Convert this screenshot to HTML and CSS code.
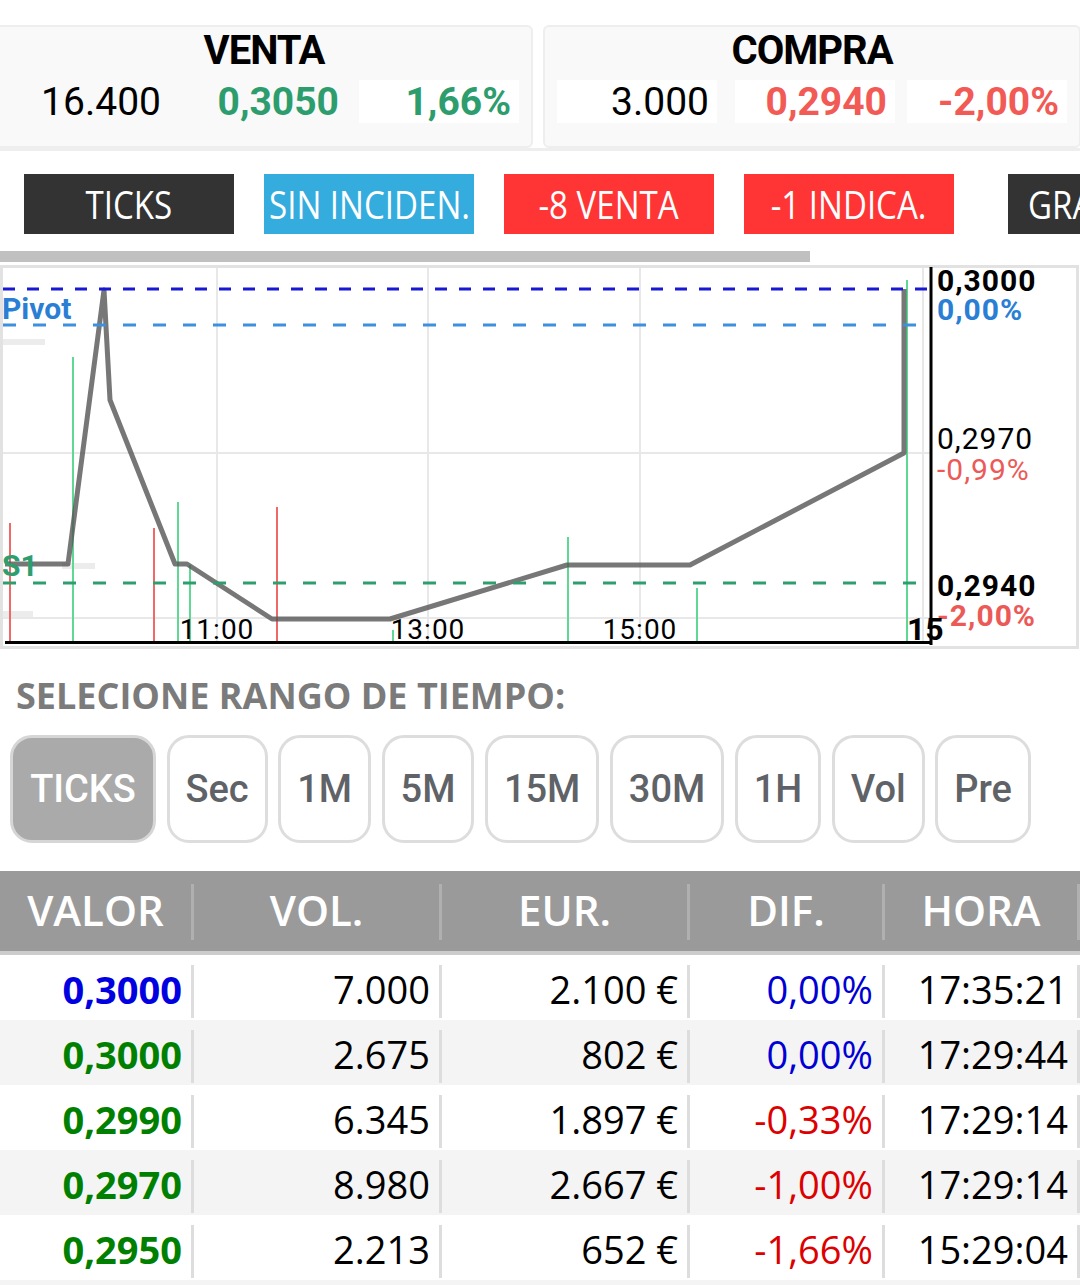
FILE: index.html
```html
<!DOCTYPE html>
<html lang="es">
<head>
  <meta charset="UTF-8" />
  <title>Cotización</title>
  <meta name="viewport" content="width=device-width, initial-scale=1.0" />
  <link rel="stylesheet" href="styles.css">
</head>
<body>

  <div class="cotizacion">
    <div class="panel">
      <h2>VENTA</h2>
      <div class="valores">
        <span class="valor">16.400</span>
        <span class="valor sube">0,3050</span>
        <span class="valor pct sube blanco">1,66%</span>
      </div>
    </div>
    <div class="panel">
      <h2>COMPRA</h2>
      <div class="valores">
        <span class="valor blanco">3.000</span>
        <span class="valor baja blanco">0,2940</span>
        <span class="valor pct baja blanco">-2,00%</span>
      </div>
    </div>
  </div>

  <div class="pestanas">
    <div class="pestana oscura"><span>TICKS</span></div>
    <div class="pestana azul"><span>SIN INCIDEN.</span></div>
    <div class="pestana roja"><span>-8 VENTA</span></div>
    <div class="pestana roja"><span>-1 INDICA.</span></div>
    <div class="pestana oscura ultima"><span>GRAFICOS</span></div>
  </div>

  <div class="barra"></div>

  <svg class="grafico" width="1080" height="385" viewBox="0 0 1080 385">
    <rect x="1.5" y="1.5" width="1076" height="381" fill="#fff" stroke="#e2e2e2" stroke-width="3"/>
    <g stroke="#e8e8e8" stroke-width="2">
      <line x1="3" y1="188" x2="930" y2="188"/>
      <line x1="3" y1="353" x2="930" y2="353"/>
      <line x1="217" y1="3" x2="217" y2="377"/>
      <line x1="428" y1="3" x2="428" y2="377"/>
      <line x1="640" y1="3" x2="640" y2="377"/>
      <line x1="923" y1="3" x2="923" y2="377"/>
    </g>
    <g fill="#ececec">
      <rect x="3" y="74" width="42" height="6"/>
      <rect x="62" y="298" width="33" height="6"/>
      <rect x="3" y="346" width="30" height="6"/>
    </g>
    <g stroke="#f06868" stroke-width="2">
      <line x1="10" y1="258" x2="10" y2="376"/>
      <line x1="154" y1="263" x2="154" y2="376"/>
      <line x1="277" y1="242" x2="277" y2="376"/>
    </g>
    <g stroke="#5fd894" stroke-width="2">
      <line x1="73" y1="92" x2="73" y2="376"/>
      <line x1="178" y1="237" x2="178" y2="376"/>
      <line x1="190" y1="300" x2="190" y2="376"/>
      <line x1="393" y1="365" x2="393" y2="376"/>
      <line x1="568" y1="272" x2="568" y2="376"/>
      <line x1="697" y1="323" x2="697" y2="376"/>
      <line x1="907" y1="15" x2="907" y2="376"/>
    </g>
    <polyline points="5,299 68,299 104,25 110,135 175,299 187,299 272,354 390,354 567,300 690,300 904,188 904,24"
      fill="none" stroke="#555" stroke-opacity="0.8" stroke-width="5" stroke-linejoin="round"/>
    <line x1="3" y1="24" x2="930" y2="24" stroke="#1717d4" stroke-width="3" stroke-dasharray="12 12"/>
    <line x1="3" y1="60" x2="930" y2="60" stroke="#3d8fe0" stroke-width="3" stroke-dasharray="13 17"/>
    <line x1="3" y1="318" x2="930" y2="318" stroke="#2e9e6f" stroke-width="3" stroke-dasharray="13 17"/>
    <line x1="931" y1="2" x2="931" y2="380" stroke="#000" stroke-width="3"/>
    <line x1="5" y1="377.5" x2="932" y2="377.5" stroke="#000" stroke-width="3"/>

    <text class="et-pivot" x="2" y="54">Pivot</text>
    <text class="et-s1" x="2" y="311">S1</text>

    <text class="et-hora" x="217" y="374">11:00</text>
    <text class="et-hora" x="428" y="374">13:00</text>
    <text class="et-hora" x="640" y="374">15:00</text>

    <text class="et-precio fuerte" x="937" y="26">0,3000</text>
    <text class="et-precio fuerte azul-txt" x="937" y="55">0,00%</text>
    <text class="et-precio" x="937" y="184">0,2970</text>
    <text class="et-precio rojo-txt" x="937" y="215">-0,99%</text>
    <text class="et-precio fuerte" x="937" y="331">0,2940</text>
    <text class="et-precio fuerte rojo-txt" x="937" y="361">-2,00%</text>
    <text class="et-quince" x="907" y="375">15</text>
  </svg>

  <div class="rango-titulo">SELECIONE RANGO DE TIEMPO:</div>

  <div class="rangos">
    <button class="rango activo">TICKS</button>
    <button class="rango">Sec</button>
    <button class="rango">1M</button>
    <button class="rango">5M</button>
    <button class="rango">15M</button>
    <button class="rango">30M</button>
    <button class="rango">1H</button>
    <button class="rango">Vol</button>
    <button class="rango">Pre</button>
  </div>

  <div class="tabla">
    <div class="fila cabecera">
      <div class="celda">VALOR</div>
      <div class="celda">VOL.</div>
      <div class="celda">EUR.</div>
      <div class="celda">DIF.</div>
      <div class="celda">HORA</div>
    </div>
    <div class="fila">
      <div class="celda precio azul-fuerte">0,3000</div>
      <div class="celda">7.000</div>
      <div class="celda">2.100 €</div>
      <div class="celda dif-azul">0,00%</div>
      <div class="celda hora">17:35:21</div>
    </div>
    <div class="fila par">
      <div class="celda precio verde">0,3000</div>
      <div class="celda">2.675</div>
      <div class="celda">802 €</div>
      <div class="celda dif-azul">0,00%</div>
      <div class="celda hora">17:29:44</div>
    </div>
    <div class="fila">
      <div class="celda precio verde">0,2990</div>
      <div class="celda">6.345</div>
      <div class="celda">1.897 €</div>
      <div class="celda dif-rojo">-0,33%</div>
      <div class="celda hora">17:29:14</div>
    </div>
    <div class="fila par">
      <div class="celda precio verde">0,2970</div>
      <div class="celda">8.980</div>
      <div class="celda">2.667 €</div>
      <div class="celda dif-rojo">-1,00%</div>
      <div class="celda hora">17:29:14</div>
    </div>
    <div class="fila">
      <div class="celda precio verde">0,2950</div>
      <div class="celda">2.213</div>
      <div class="celda">652 €</div>
      <div class="celda dif-rojo">-1,66%</div>
      <div class="celda hora">15:29:04</div>
    </div>
    <div class="fila par"></div>
  </div>

</body>
</html>
```

FILE: styles.css
```css
* {
  box-sizing: border-box;
}

body {
  margin: 0;
  width: 1080px;
  overflow: hidden;
  background: #fff;
  font-family: Roboto, sans-serif;
  color: #000;
}

/* cabecera venta / compra */
.cotizacion {
  display: flex;
  gap: 10px;
  margin-left: -5px;
  padding-top: 25px;
  border-bottom: 3px solid #eeeeee;
}

.panel {
  flex: 0 0 536px;
  height: 123px;
  background: #f9f9f9;
  border: 2px solid #eeeeee;
  border-radius: 6px;
  padding: 2px 12px 0;
}

.panel h2 {
  margin: 0;
  font-size: 40px;
  line-height: 44px;
  font-weight: 700;
  text-align: center;
  letter-spacing: -1px;
}

.valores {
  display: flex;
  margin-top: 7px;
}

.valor {
  width: 160px;
  height: 43px;
  line-height: 43px;
  padding-top: 1px;
  font-size: 39px;
  text-align: right;
  padding-right: 8px;
}

.valor + .valor {
  margin-left: 18px;
}

.valor.pct {
  margin-left: 12px;
}

.blanco {
  background: #fff;
}

.sube {
  color: #2d9d6e;
  font-weight: 700;
}

.baja {
  color: #f25a55;
  font-weight: 700;
}

/* pestañas */
.pestanas {
  display: flex;
  gap: 30px;
  padding-left: 24px;
  margin-top: 23px;
  white-space: nowrap;
  overflow: hidden;
}

.pestana {
  flex: 0 0 210px;
  min-width: 0;
  height: 60px;
  display: flex;
  align-items: center;
  justify-content: center;
  overflow: hidden;
  color: #fff;
  font-family: "Open Sans", sans-serif;
  font-size: 38px;
}

.pestana span {
  display: inline-block;
  flex-shrink: 0;
  transform: scaleX(0.87);
}

.oscura {
  background: #333333;
}

.azul {
  background: #35acde;
}

.roja {
  background: #ff3535;
}

.pestana.ultima {
  margin-left: 24px;
  justify-content: flex-start;
  padding-left: 20px;
}

.pestana.ultima span {
  transform-origin: left center;
}

.barra {
  width: 810px;
  height: 11px;
  margin-top: 17px;
  background: #c0c0c0;
}

/* grafico */
.grafico {
  display: block;
  margin-top: 3px;
}

.grafico text {
  font-family: Roboto, sans-serif;
}

.et-pivot {
  font-size: 30px;
  font-weight: 700;
  fill: #2a7fd4;
}

.et-s1 {
  font-size: 30px;
  font-weight: 700;
  fill: #2e9e6f;
}

.et-hora {
  font-size: 28px;
  letter-spacing: 1px;
  text-anchor: middle;
  fill: #000;
}

.et-precio {
  font-size: 30px;
  letter-spacing: 1px;
  fill: #000;
}

.et-precio.fuerte {
  font-weight: 700;
}

.azul-txt {
  fill: #2a7fd4;
}

.et-precio.rojo-txt {
  fill: #ec5a57;
}

.et-quince {
  font-size: 32px;
  font-weight: 700;
  fill: #000;
}

/* rango de tiempo */
.rango-titulo {
  margin: 26px 0 0 16px;
  font-family: "Open Sans", sans-serif;
  font-size: 36px;
  line-height: 40px;
  font-weight: 700;
  color: #7b7b7b;
}

.rangos {
  display: flex;
  gap: 10.5px;
  padding-left: 10px;
  margin-top: 19px;
}

.rango {
  height: 108px;
  padding: 0 16px;
  border: 3px solid #dddddd;
  border-radius: 22px;
  background: #fff;
  color: #5f6368;
  font-family: Roboto, sans-serif;
  font-size: 38px;
  font-weight: 500;
}

.rango.activo {
  min-width: 146px;
  background: #aaaaaa;
  color: #fff;
  border-color: #d6d6d6;
}

/* tabla de operaciones */
.tabla {
  margin-top: 28px;
  font-family: "Open Sans", sans-serif;
}

.fila {
  display: grid;
  grid-template-columns: 194px 248px 248px 195px 195px;
  height: 65px;
}

.fila.par {
  background: #f4f4f4;
}

.celda {
  display: flex;
  align-items: center;
  justify-content: flex-end;
  height: 53px;
  margin: 10px 0 2px;
  padding: 0 9px 6px 0;
  border-right: 3px solid #dddddd;
  font-size: 38px;
  white-space: nowrap;
}

.cabecera {
  height: 84px;
  background: #9a9a9a;
  border-bottom: 4px solid #cccccc;
  color: #fff;
}

.cabecera .celda {
  justify-content: center;
  height: 56px;
  margin: 13px 0 11px;
  padding: 0 0 5px;
  border-right-color: #b0b0b0;
  font-size: 42px;
  font-weight: 600;
}

.precio {
  font-weight: 700;
}

.azul-fuerte {
  color: #0000e0;
}

.verde {
  color: #008000;
}

.dif-azul {
  color: #0000d4;
}

.dif-rojo {
  color: #dd0000;
}

.hora {
  font-weight: 500;
}
```
